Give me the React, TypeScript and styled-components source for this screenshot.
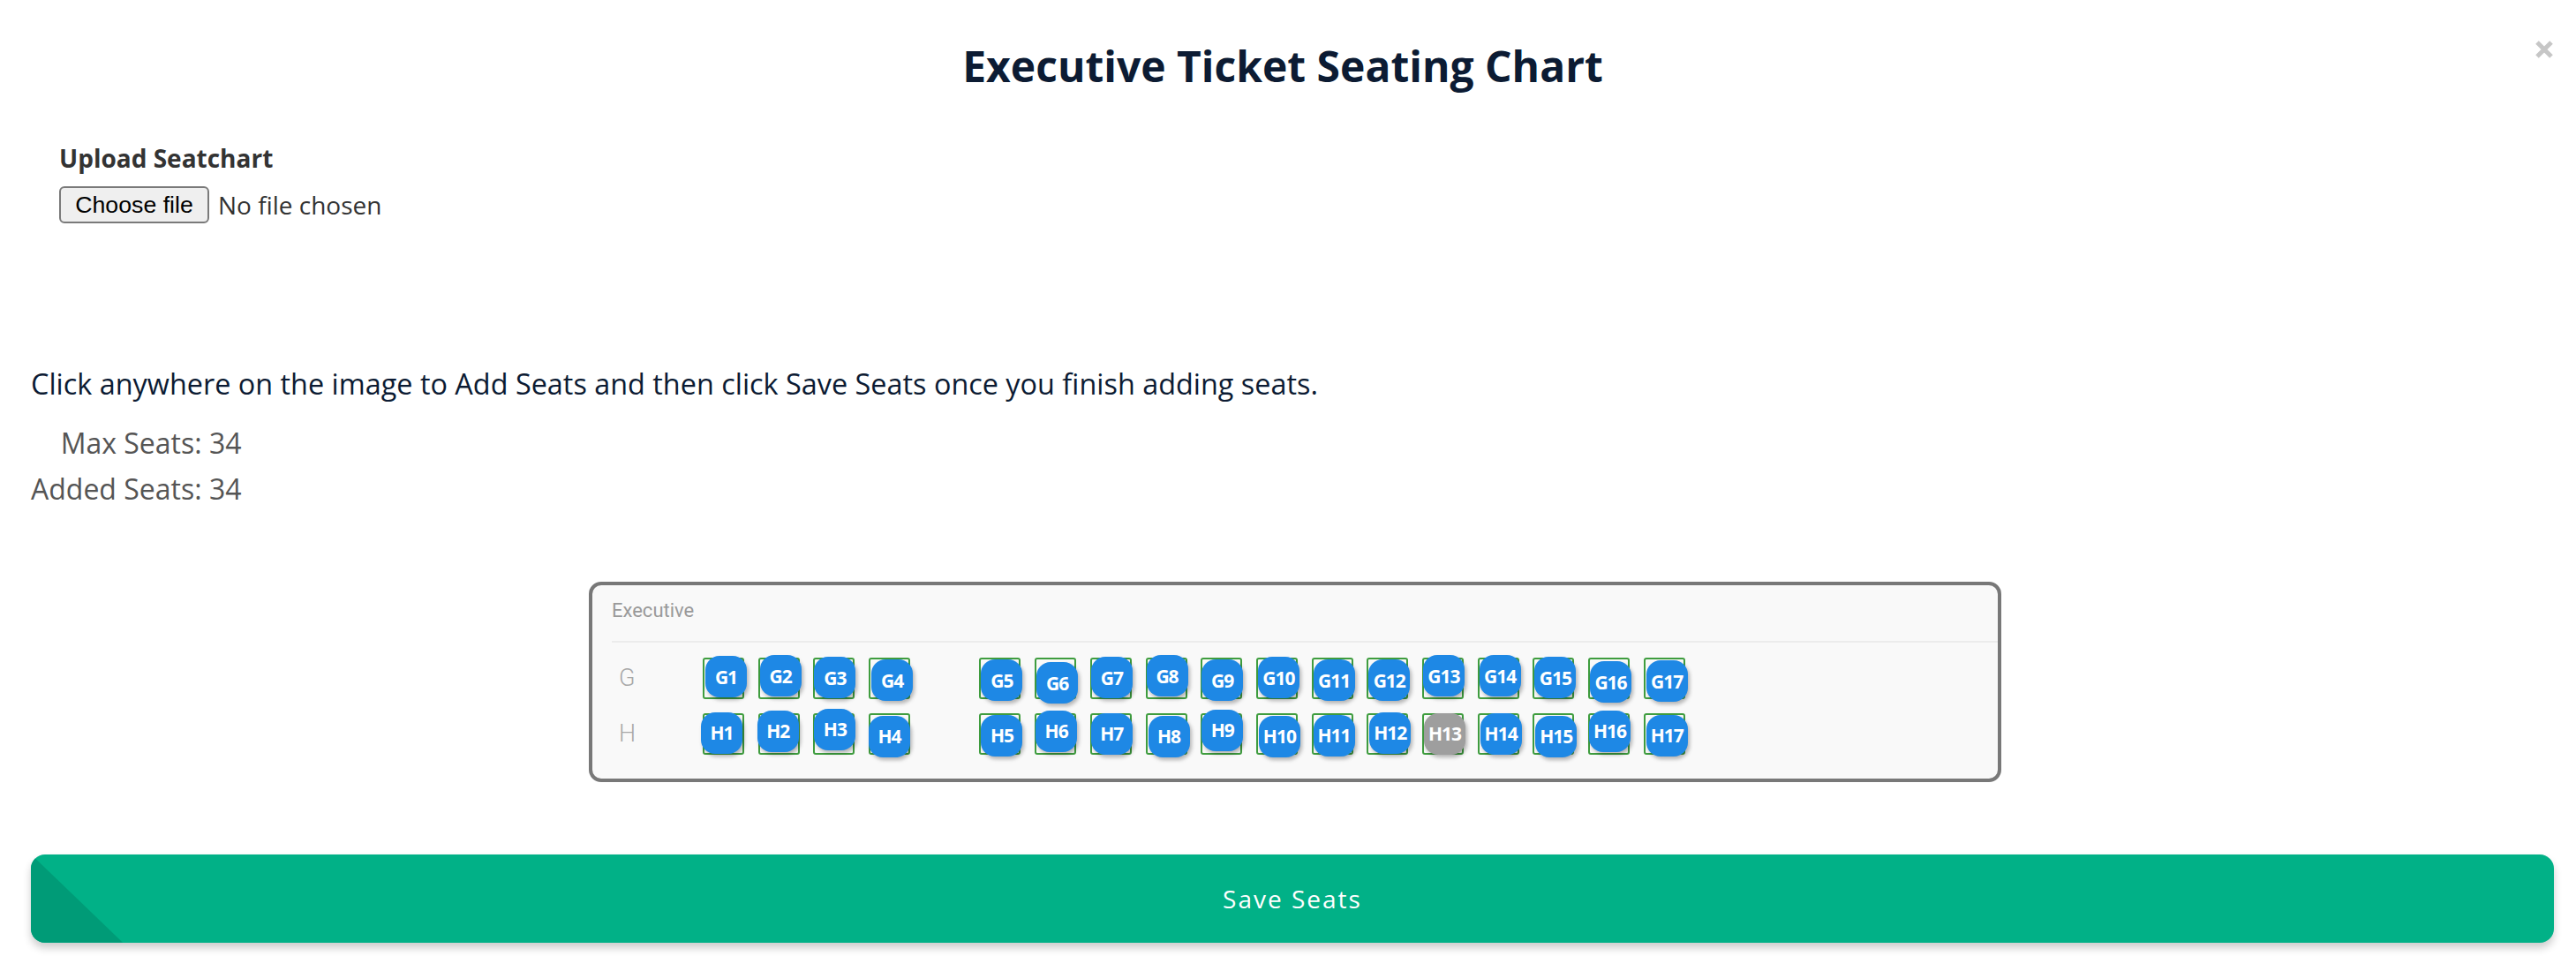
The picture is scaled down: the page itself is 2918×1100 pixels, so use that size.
import React from "react";
import styled, { createGlobalStyle } from "styled-components";

const GlobalStyle = createGlobalStyle`
  html, body {
    margin: 0;
    padding: 0;
    background: #ffffff;
  }
  body {
    font-family: "Open Sans", "Noto Sans", sans-serif;
    color: #0c1b33;
  }
`;

const Modal = styled.div`
  position: relative;
  box-sizing: border-box;
  width: 2918px;
  padding: 42px 25px 40px 35px;
  display: flex;
  flex-direction: column;
`;

const Title = styled.h1`
  margin: 0;
  padding-right: 22px;
  font-family: "Open Sans", sans-serif;
  font-size: 48px;
  line-height: 66px;
  font-weight: 700;
  color: #0c1b33;
  text-align: center;
`;

const CloseButton = styled.button`
  position: absolute;
  top: 46px;
  right: 25px;
  width: 22px;
  height: 20px;
  padding: 0;
  border: none;
  background: transparent;
  cursor: pointer;
  display: flex;
  align-items: center;
  justify-content: center;
`;

const UploadSection = styled.div`
  margin-top: 52px;
  padding-left: 32px;
  display: flex;
  flex-direction: column;
`;

const UploadLabel = styled.label`
  font-size: 28px;
  line-height: 38px;
  font-weight: 700;
  color: #333333;
`;

const FileRow = styled.div`
  margin-top: 13px;
  display: flex;
  align-items: center;
  gap: 10px;
`;

const FileButton = styled.span`
  box-sizing: border-box;
  height: 42px;
  width: 170px;
  display: flex;
  align-items: center;
  justify-content: center;
  border: 2px solid #7a7a7a;
  border-radius: 6px;
  background: #efefef;
  font-family: "Liberation Sans", Arial, sans-serif;
  font-size: 26.7px;
  color: #000000;
`;

const FileStatus = styled.span`
  font-size: 28px;
  line-height: 38px;
  color: #333333;
`;

const Instructions = styled.p`
  margin: 159px 0 0 0;
  font-size: 32.4px;
  line-height: 44px;
  color: #0c1b33;
`;

const Counts = styled.div`
  margin-top: 20px;
  align-self: flex-start;
  display: flex;
  flex-direction: column;
  align-items: flex-end;
`;

const CountLine = styled.div`
  font-size: 32px;
  line-height: 52px;
  color: #555555;
`;

const Panel = styled.div`
  box-sizing: border-box;
  margin: 79px 0 0 632px;
  width: 1600px;
  border: 4px solid #787878;
  border-radius: 14px;
  background: #f9f9f9;
  display: flex;
  flex-direction: column;
`;

const PanelHeader = styled.div`
  margin-left: 22px;
  padding: 16px 0 21px 0;
  border-bottom: 2px solid #ececec;
  font-family: Roboto, "Open Sans", sans-serif;
  font-size: 22px;
  line-height: 26px;
  color: #9a9a9a;
`;

const PanelBody = styled.div`
  padding: 17px 0 27px 30px;
  display: flex;
  flex-direction: column;
  gap: 15.7px;
`;

const SeatRow = styled.div`
  display: flex;
  align-items: center;
`;

const RowLabel = styled.div`
  width: 95px;
  font-family: Roboto, "Open Sans", sans-serif;
  font-weight: 300;
  font-size: 27px;
  line-height: 47px;
  color: #a8a8a8;
`;

const SeatGrid = styled.div`
  display: grid;
  grid-template-columns: repeat(18, 47px);
  column-gap: 15.7px;
`;

const Cell = styled.div<{ $col: number }>`
  position: relative;
  box-sizing: border-box;
  grid-column: ${(p) => p.$col};
  width: 47px;
  height: 47px;
  border: 2px solid #3f9d3f;
  border-radius: 3px;
`;

const Seat = styled.div<{ $dx: number; $dy: number; $taken?: boolean }>`
  position: absolute;
  left: -1px;
  top: -1px;
  width: 47px;
  height: 47px;
  transform: translate(${(p) => p.$dx}px, ${(p) => p.$dy}px);
  border-radius: 16px;
  background: ${(p) => (p.$taken ? "#9e9e9e" : "#1e88e5")};
  box-shadow: 2px 3px 4px rgba(0, 0, 0, 0.28);
  display: flex;
  align-items: center;
  justify-content: center;
  font-family: "Open Sans", sans-serif;
  font-weight: 700;
  font-size: 21px;
  letter-spacing: -1px;
  color: #ffffff;
`;

const SaveButton = styled.button`
  position: relative;
  overflow: hidden;
  margin-top: 82px;
  height: 100px;
  width: 100%;
  border: none;
  border-radius: 16px;
  background: #01b187;
  box-shadow: 0 6px 10px rgba(0, 0, 0, 0.2);
  font-family: "Open Sans", sans-serif;
  font-size: 28px;
  letter-spacing: 2px;
  color: #ffffff;
  cursor: pointer;

  &::before {
    content: "";
    position: absolute;
    left: 0;
    top: 0;
    bottom: 0;
    width: 104px;
    background: #009b77;
    clip-path: polygon(0 0, 100% 100%, 0 100%);
  }
`;

const SaveLabel = styled.span`
  position: relative;
`;

type SeatData = { label: string; col: number; dx: number; dy: number; taken?: boolean };

const gOffsets: [number, number][] = [
  [2, -3], [1, -4], [0, -2], [2, 1], [1, 1], [1, 4], [0, -2], [0, -4], [0, 1],
  [1, -2], [1, 1], [1, 1], [0, -4], [1, -4], [1, -2], [1, 3], [2, 2],
];
const hOffsets: [number, number][] = [
  [-3, -2], [-2, -4], [0, -6], [-1, 2], [1, 1], [0, -4], [0, -1], [2, 2], [0, -5],
  [2, 2], [1, 1], [2, -2], [1, -1], [2, -1], [2, 2], [0, -4], [2, 1],
];

const buildRow = (row: string, offsets: [number, number][]): SeatData[] =>
  offsets.map(([dx, dy], i) => {
    const n = i + 1;
    return {
      label: `${row}${n}`,
      col: n <= 4 ? n : n + 1,
      dx,
      dy,
      taken: row === "H" && n === 13,
    };
  });

const rows = [
  { name: "G", seats: buildRow("G", gOffsets) },
  { name: "H", seats: buildRow("H", hOffsets) },
];

export default function App() {
  return (
    <>
      <GlobalStyle />
      <Modal>
        <Title>Executive Ticket Seating Chart</Title>
        <CloseButton aria-label="Close">
          <svg width="22" height="20" viewBox="0 0 22 20">
            <path d="M3 2 L19 18 M19 2 L3 18" stroke="#c6c6c6" strokeWidth="5" strokeLinecap="butt" />
          </svg>
        </CloseButton>

        <UploadSection>
          <UploadLabel>Upload Seatchart</UploadLabel>
          <FileRow>
            <FileButton>Choose file</FileButton>
            <FileStatus>No file chosen</FileStatus>
          </FileRow>
        </UploadSection>

        <Instructions>
          Click anywhere on the image to Add Seats and then click Save Seats once you finish adding seats.
        </Instructions>

        <Counts>
          <CountLine>Max Seats: 34</CountLine>
          <CountLine>Added Seats: 34</CountLine>
        </Counts>

        <Panel>
          <PanelHeader>Executive</PanelHeader>
          <PanelBody>
            {rows.map((r) => (
              <SeatRow key={r.name}>
                <RowLabel>{r.name}</RowLabel>
                <SeatGrid>
                  {r.seats.map((s) => (
                    <Cell key={s.label} $col={s.col}>
                      <Seat $dx={s.dx} $dy={s.dy} $taken={s.taken}>
                        {s.label}
                      </Seat>
                    </Cell>
                  ))}
                </SeatGrid>
              </SeatRow>
            ))}
          </PanelBody>
        </Panel>

        <SaveButton>
          <SaveLabel>Save Seats</SaveLabel>
        </SaveButton>
      </Modal>
    </>
  );
}
